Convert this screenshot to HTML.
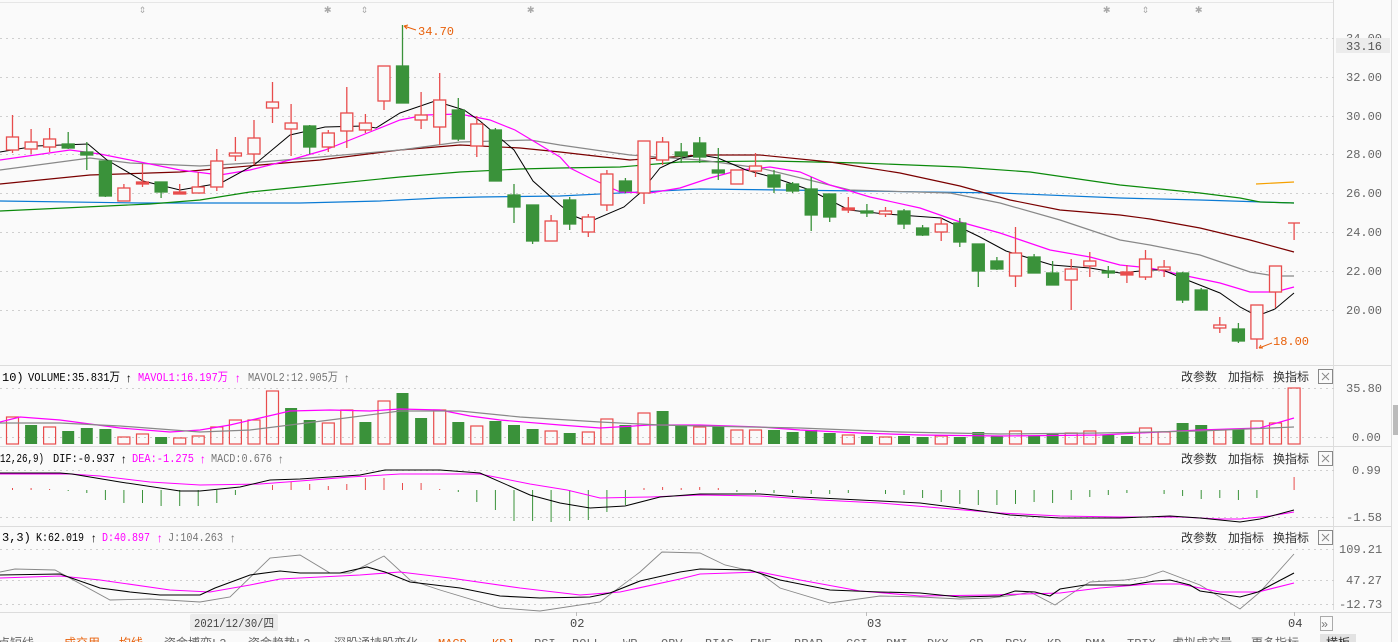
<!DOCTYPE html>
<html><head><meta charset="utf-8"><style>
html,body{margin:0;padding:0;background:#fafafa;overflow:hidden;width:1398px;height:642px}
svg{display:block}
text{font-family:"Liberation Mono","Noto Sans CJK SC",monospace;font-size:12px}
</style></head><body>
<svg width="1398" height="642" viewBox="0 0 1398 642" xmlns="http://www.w3.org/2000/svg">
<rect width="1398" height="642" fill="#fafafa"/>
<line x1="0" y1="2.5" x2="1334" y2="2.5" stroke="#e6e6e6"/>
<line x1="1333.5" y1="0" x2="1333.5" y2="610" stroke="#dcdcdc"/>
<line x1="1391.5" y1="0" x2="1391.5" y2="642" stroke="#dcdcdc"/>
<line x1="0" y1="365.5" x2="1392" y2="365.5" stroke="#dcdcdc"/>
<line x1="0" y1="446.5" x2="1392" y2="446.5" stroke="#dcdcdc"/>
<line x1="0" y1="526.5" x2="1392" y2="526.5" stroke="#dcdcdc"/>
<line x1="0" y1="612.5" x2="1392" y2="612.5" stroke="#dcdcdc"/>
<rect x="1393" y="405" width="5" height="30" fill="#bbb"/>
<g stroke="#cfcfcf" stroke-dasharray="2,4">
<line x1="0" y1="38.5" x2="1336" y2="38.5"/><line x1="0" y1="77.5" x2="1336" y2="77.5"/><line x1="0" y1="116.5" x2="1336" y2="116.5"/><line x1="0" y1="154.5" x2="1336" y2="154.5"/><line x1="0" y1="193.5" x2="1336" y2="193.5"/><line x1="0" y1="232.5" x2="1336" y2="232.5"/><line x1="0" y1="271.5" x2="1336" y2="271.5"/><line x1="0" y1="310.5" x2="1336" y2="310.5"/>
<line x1="0" y1="388.5" x2="1336" y2="388.5"/><line x1="0" y1="437.5" x2="1336" y2="437.5"/>
<line x1="0" y1="470.5" x2="1336" y2="470.5"/><line x1="0" y1="517.5" x2="1336" y2="517.5"/>
<line x1="0" y1="549.5" x2="1336" y2="549.5"/><line x1="0" y1="580.5" x2="1336" y2="580.5"/><line x1="0" y1="604.5" x2="1336" y2="604.5"/>
</g>
<g fill="#aaa" font-size="11"><text x="139" y="13">⇕</text><text x="324" y="13">✱</text><text x="361" y="13">⇕</text><text x="527" y="13">✱</text><text x="1103" y="13">✱</text><text x="1142" y="13">⇕</text><text x="1195" y="13">✱</text></g>
<g fill="#666"><text x="1346" y="42">34.00</text>
<rect x="1336" y="38" width="54" height="15" fill="#ececec"/><text x="1346" y="50" fill="#555">33.16</text>
<text x="1346" y="81">32.00</text><text x="1346" y="120">30.00</text><text x="1346" y="158">28.00</text><text x="1346" y="197">26.00</text><text x="1346" y="236">24.00</text><text x="1346" y="275">22.00</text><text x="1346" y="314">20.00</text>
<text x="1346" y="392">35.80</text><text x="1352" y="441">0.00</text>
<text x="1352" y="474">0.99</text><text x="1346" y="521">-1.58</text>
<text x="1339" y="553">109.21</text><text x="1346" y="584">47.27</text><text x="1339" y="608">-12.73</text></g>
<g fill="none" stroke-width="1.2">
<polyline stroke="#0a7ad4" points="0,201 140,203 300,203 380,201 440,198 480,197 560,196 700,189 860,191 1000,193 1120,198 1200,200 1294,203"/>
<polyline stroke="#0b8a0b" points="0,211 150,204 200,200 250,192 320,185 400,177 460,172 520,169 560,168 620,167 680,162 770,161 860,163 960,167 1030,172 1120,185 1150,188 1200,193 1240,198 1260,202 1294,203"/>
<polyline stroke="#7a0000" points="0,184 90,175 180,172 260,165 320,160 400,150 460,145 520,148 560,152 630,160 700,155 760,155 830,162 900,173 960,186 1010,200 1060,210 1120,215 1150,219 1200,228 1250,240 1294,252"/>
<polyline stroke="#888" points="0,170 90,158 130,163 200,166 250,163 320,157 400,150 460,142 530,140 560,145 630,155 700,160 760,168 850,190 950,193 1000,203 1060,220 1120,240 1150,245 1200,255 1250,272 1275,276 1294,276"/>
<polyline stroke="#f0f" points="0,160 70,150 100,154 180,170 220,175 250,170 290,160 325,150 350,140 375,130 400,120 425,115 460,114 490,120 515,130 540,145 560,157 570,168 590,178 620,192 650,193 680,188 710,178 740,170 770,167 800,172 830,185 870,197 920,208 960,222 1000,233 1050,250 1090,257 1120,265 1150,268 1182,275 1220,283 1250,292 1275,292 1294,287"/>
<polyline stroke="#000" stroke-width="1" points="0,152 36,146 88,144 107,160 143,181 180,190 221,183 254,165 290,135 325,127 364,126 376,128 400,113 435,101 464,110 480,121 514,150 533,181 560,205 574,216 589,222 624,207 640,193 660,168 681,158 700,155 718,158 746,170 775,178 810,190 849,210 885,214 941,218 980,237 1006,251 1052,265 1090,268 1120,273 1150,270 1163,270 1182,278 1220,293 1240,307 1257,316 1275,309 1294,293"/>
<polyline stroke="#f5a000" points="1256,184 1275,183 1294,182"/>
</g>
<g stroke-width="1.3">
<g stroke="#e84c4c" fill="#fafafa">
<line x1="12.5" y1="115" x2="12.5" y2="153"/><rect x="6.5" y="137" width="12" height="13"/>
<line x1="31.1" y1="129" x2="31.1" y2="154"/><rect x="25.1" y="142" width="12" height="7"/>
<line x1="49.6" y1="128" x2="49.6" y2="152"/><rect x="43.6" y="139" width="12" height="8"/>
<line x1="123.9" y1="184" x2="123.9" y2="201"/><rect x="117.9" y="188" width="12" height="13"/>
<line x1="142.5" y1="164" x2="142.5" y2="187"/><rect x="136.5" y="182" width="12" height="2" fill="#e84c4c"/>
<line x1="179.7" y1="184" x2="179.7" y2="194"/><rect x="173.7" y="192" width="12" height="2" fill="#e84c4c"/>
<line x1="198.2" y1="172" x2="198.2" y2="193"/><rect x="192.2" y="187" width="12" height="6"/>
<line x1="216.8" y1="149" x2="216.8" y2="191"/><rect x="210.8" y="161" width="12" height="26"/>
<line x1="235.4" y1="137" x2="235.4" y2="161"/><rect x="229.4" y="153" width="12" height="3"/>
<line x1="254" y1="120" x2="254" y2="165"/><rect x="248" y="138" width="12" height="16"/>
<line x1="272.5" y1="82" x2="272.5" y2="123"/><rect x="266.5" y="102" width="12" height="6"/>
<line x1="291.1" y1="104" x2="291.1" y2="156"/><rect x="285.1" y="123" width="12" height="6"/>
<line x1="328.3" y1="130" x2="328.3" y2="152"/><rect x="322.3" y="133" width="12" height="14"/>
<line x1="346.8" y1="87" x2="346.8" y2="148"/><rect x="340.8" y="113" width="12" height="18"/>
<line x1="365.4" y1="114" x2="365.4" y2="133"/><rect x="359.4" y="123" width="12" height="7"/>
<line x1="384" y1="66" x2="384" y2="110"/><rect x="378" y="66" width="12" height="35"/>
<line x1="421.1" y1="92" x2="421.1" y2="129"/><rect x="415.1" y="115" width="12" height="5"/>
<line x1="439.7" y1="73" x2="439.7" y2="145"/><rect x="433.7" y="100" width="12" height="27"/>
<line x1="476.8" y1="116" x2="476.8" y2="157"/><rect x="470.8" y="124" width="12" height="22"/>
<line x1="551.1" y1="215" x2="551.1" y2="241"/><rect x="545.1" y="221" width="12" height="20"/>
<line x1="588.3" y1="214" x2="588.3" y2="237"/><rect x="582.3" y="217" width="12" height="15"/>
<line x1="606.9" y1="170" x2="606.9" y2="211"/><rect x="600.9" y="174" width="12" height="31"/>
<line x1="644" y1="141" x2="644" y2="204"/><rect x="638" y="141" width="12" height="52"/>
<line x1="662.6" y1="137" x2="662.6" y2="165"/><rect x="656.6" y="142" width="12" height="18"/>
<line x1="736.9" y1="170" x2="736.9" y2="184"/><rect x="730.9" y="170" width="12" height="14"/>
<line x1="755.5" y1="153" x2="755.5" y2="177"/><rect x="749.5" y="166" width="12" height="5"/>
<line x1="848.3" y1="197" x2="848.3" y2="213"/><rect x="842.3" y="208" width="12" height="2" fill="#e84c4c"/>
<line x1="885.5" y1="207" x2="885.5" y2="217"/><rect x="879.5" y="211" width="12" height="3"/>
<line x1="941.2" y1="218" x2="941.2" y2="241"/><rect x="935.2" y="224" width="12" height="8"/>
<line x1="1015.5" y1="227" x2="1015.5" y2="287"/><rect x="1009.5" y="253" width="12" height="23"/>
<line x1="1071.2" y1="259" x2="1071.2" y2="310"/><rect x="1065.2" y="269" width="12" height="11"/>
<line x1="1089.8" y1="252" x2="1089.8" y2="277"/><rect x="1083.8" y="261" width="12" height="5"/>
<line x1="1126.9" y1="265" x2="1126.9" y2="283"/><rect x="1120.9" y="272" width="12" height="3" fill="#e84c4c"/>
<line x1="1145.5" y1="250" x2="1145.5" y2="280"/><rect x="1139.5" y="259" width="12" height="18"/>
<line x1="1164.1" y1="260" x2="1164.1" y2="277"/><rect x="1158.1" y="267" width="12" height="3"/>
<line x1="1219.8" y1="317" x2="1219.8" y2="333"/><rect x="1213.8" y="325" width="12" height="3"/>
<line x1="1256.9" y1="305" x2="1256.9" y2="349"/><rect x="1250.9" y="305" width="12" height="34"/>
<line x1="1275.5" y1="266" x2="1275.5" y2="308"/><rect x="1269.5" y="266" width="12" height="26"/>
<line x1="1294.1" y1="223" x2="1294.1" y2="240"/><line x1="1288" y1="223" x2="1300" y2="223"/>
</g>
<g stroke="#3a923a" fill="#3a923a">
<line x1="68.2" y1="132" x2="68.2" y2="149"/><rect x="62.2" y="144" width="12" height="4"/>
<line x1="86.8" y1="142" x2="86.8" y2="170"/><rect x="80.8" y="152" width="12" height="3"/>
<line x1="105.4" y1="161" x2="105.4" y2="197"/><rect x="99.4" y="161" width="12" height="35"/>
<line x1="161.1" y1="182" x2="161.1" y2="198"/><rect x="155.1" y="182" width="12" height="10"/>
<line x1="309.7" y1="125" x2="309.7" y2="154"/><rect x="303.7" y="126" width="12" height="21"/>
<line x1="402.5" y1="25" x2="402.5" y2="103"/><rect x="396.5" y="66" width="12" height="37"/>
<line x1="458.3" y1="98" x2="458.3" y2="141"/><rect x="452.3" y="110" width="12" height="29"/>
<line x1="495.4" y1="128" x2="495.4" y2="181"/><rect x="489.4" y="130" width="12" height="51"/>
<line x1="514" y1="184" x2="514" y2="223"/><rect x="508" y="195" width="12" height="12"/>
<line x1="532.6" y1="205" x2="532.6" y2="244"/><rect x="526.6" y="205" width="12" height="36"/>
<line x1="569.7" y1="197" x2="569.7" y2="230"/><rect x="563.7" y="200" width="12" height="24"/>
<line x1="625.4" y1="178" x2="625.4" y2="193"/><rect x="619.4" y="181" width="12" height="10"/>
<line x1="681.2" y1="143" x2="681.2" y2="163"/><rect x="675.2" y="152" width="12" height="4"/>
<line x1="699.7" y1="137" x2="699.7" y2="163"/><rect x="693.7" y="143" width="12" height="14"/>
<line x1="718.3" y1="148" x2="718.3" y2="180"/><rect x="712.3" y="170" width="12" height="3"/>
<line x1="774" y1="170" x2="774" y2="193"/><rect x="768" y="175" width="12" height="12"/>
<line x1="792.6" y1="182" x2="792.6" y2="193"/><rect x="786.6" y="184" width="12" height="7"/>
<line x1="811.2" y1="177" x2="811.2" y2="231"/><rect x="805.2" y="189" width="12" height="26"/>
<line x1="829.7" y1="194" x2="829.7" y2="222"/><rect x="823.7" y="194" width="12" height="23"/>
<line x1="866.9" y1="204" x2="866.9" y2="217"/><rect x="860.9" y="211" width="12" height="2"/>
<line x1="904" y1="209" x2="904" y2="229"/><rect x="898" y="211" width="12" height="13"/>
<line x1="922.6" y1="225" x2="922.6" y2="236"/><rect x="916.6" y="228" width="12" height="7"/>
<line x1="959.8" y1="218" x2="959.8" y2="247"/><rect x="953.8" y="223" width="12" height="19"/>
<line x1="978.3" y1="244" x2="978.3" y2="287"/><rect x="972.3" y="244" width="12" height="27"/>
<line x1="996.9" y1="257" x2="996.9" y2="270"/><rect x="990.9" y="261" width="12" height="8"/>
<line x1="1034.1" y1="254" x2="1034.1" y2="273"/><rect x="1028.1" y="257" width="12" height="16"/>
<line x1="1052.6" y1="261" x2="1052.6" y2="285"/><rect x="1046.6" y="273" width="12" height="12"/>
<line x1="1108.3" y1="266" x2="1108.3" y2="278"/><rect x="1102.3" y="271" width="12" height="2"/>
<line x1="1182.6" y1="272" x2="1182.6" y2="303"/><rect x="1176.6" y="273" width="12" height="27"/>
<line x1="1201.2" y1="288" x2="1201.2" y2="310"/><rect x="1195.2" y="290" width="12" height="20"/>
<line x1="1238.4" y1="323" x2="1238.4" y2="343"/><rect x="1232.4" y="329" width="12" height="12"/>
</g>
</g>
<g fill="#e8600a" font-size="11"><text x="418" y="35">34.70</text><text x="1273" y="345">18.00</text></g>
<path d="M404 26 L416 30 M404 26 l4 -1 m-4 1 l3 3" stroke="#e8600a" fill="none"/>
<path d="M1259 348 L1272 343 M1259 348 l4 0 m-4 0 l2 -3" stroke="#e8600a" fill="none"/>
<g font-size="12">
<text x="2" y="381" fill="#000">10)</text><text x="28" y="381" textLength="92" lengthAdjust="spacingAndGlyphs">VOLUME:35.831万</text><text x="125" y="382">↑</text>
<text x="138" y="381" fill="#f0f" textLength="90" lengthAdjust="spacingAndGlyphs">MAVOL1:16.197万</text><text x="234" y="382" fill="#f0f">↑</text>
<text x="248" y="381" fill="#777" textLength="90" lengthAdjust="spacingAndGlyphs">MAVOL2:12.905万</text><text x="343" y="382" fill="#777">↑</text>
<text x="0" y="462" textLength="44" lengthAdjust="spacingAndGlyphs">12,26,9)</text><text x="53" y="462" textLength="62" lengthAdjust="spacingAndGlyphs">DIF:-0.937</text><text x="120" y="463">↑</text>
<text x="132" y="462" fill="#f0f" textLength="62" lengthAdjust="spacingAndGlyphs">DEA:-1.275</text><text x="199" y="463" fill="#f0f">↑</text>
<text x="211" y="462" fill="#777" textLength="61" lengthAdjust="spacingAndGlyphs">MACD:0.676</text><text x="277" y="463" fill="#777">↑</text>
<text x="2" y="541">3,3)</text><text x="36" y="541" textLength="48" lengthAdjust="spacingAndGlyphs">K:62.019</text><text x="90" y="542">↑</text>
<text x="102" y="541" fill="#f0f" textLength="48" lengthAdjust="spacingAndGlyphs">D:40.897</text><text x="156" y="542" fill="#f0f">↑</text>
<text x="168" y="541" fill="#777" textLength="55" lengthAdjust="spacingAndGlyphs">J:104.263</text><text x="229" y="542" fill="#777">↑</text>
</g>
<g style="font-family:'Liberation Sans','Noto Sans CJK SC',sans-serif;font-size:13px" fill="#333">
<text x="1181" y="381">改参数</text><text x="1228" y="381">加指标</text><text x="1273" y="381">换指标</text>
<text x="1181" y="463">改参数</text><text x="1228" y="463">加指标</text><text x="1273" y="463">换指标</text>
<text x="1181" y="542">改参数</text><text x="1228" y="542">加指标</text><text x="1273" y="542">换指标</text>
</g>
<g fill="none" stroke="#888"><rect x="1318.5" y="369.5" width="14" height="14"/><rect x="1318.5" y="451.5" width="14" height="14"/><rect x="1318.5" y="530.5" width="14" height="14"/>
<path d="M1322 373l7 7M1329 373l-7 7M1322 455l7 7M1329 455l-7 7M1322 534l7 7M1329 534l-7 7"/></g>
<g stroke-width="1.2">
<g fill="#3a923a">
<rect x="25.1" y="425" width="12" height="19"/><rect x="62.2" y="431" width="12" height="13"/><rect x="80.8" y="428" width="12" height="16"/><rect x="99.4" y="429" width="12" height="15"/><rect x="155.1" y="437" width="12" height="7"/><rect x="285.1" y="408" width="12" height="36"/><rect x="303.7" y="420" width="12" height="24"/><rect x="359.4" y="422" width="12" height="22"/><rect x="396.5" y="393" width="12" height="51"/><rect x="415.1" y="418" width="12" height="26"/><rect x="452.3" y="422" width="12" height="22"/><rect x="489.4" y="421" width="12" height="23"/><rect x="508" y="425" width="12" height="19"/><rect x="526.6" y="429" width="12" height="15"/><rect x="563.7" y="433" width="12" height="11"/><rect x="619.4" y="425" width="12" height="19"/><rect x="656.6" y="411" width="12" height="33"/><rect x="675.2" y="425" width="12" height="19"/><rect x="712.3" y="426" width="12" height="18"/><rect x="768" y="430" width="12" height="14"/><rect x="786.6" y="432" width="12" height="12"/><rect x="805.2" y="430" width="12" height="14"/><rect x="823.7" y="433" width="12" height="11"/><rect x="860.9" y="436" width="12" height="8"/><rect x="898" y="436" width="12" height="8"/><rect x="916.6" y="437" width="12" height="7"/><rect x="953.8" y="437" width="12" height="7"/><rect x="972.3" y="432" width="12" height="12"/><rect x="990.9" y="436" width="12" height="8"/><rect x="1028.1" y="436" width="12" height="8"/><rect x="1046.6" y="434" width="12" height="10"/><rect x="1102.3" y="435" width="12" height="9"/><rect x="1120.9" y="436" width="12" height="8"/><rect x="1176.6" y="423" width="12" height="21"/><rect x="1195.2" y="425" width="12" height="19"/><rect x="1232.4" y="429" width="12" height="15"/>
</g>
<g fill="none" stroke="#e84c4c">
<rect x="6.5" y="417" width="12" height="27"/><rect x="43.6" y="427" width="12" height="17"/><rect x="117.9" y="437" width="12" height="7"/><rect x="136.5" y="434" width="12" height="10"/><rect x="173.7" y="438" width="12" height="6"/><rect x="192.2" y="436" width="12" height="8"/><rect x="210.8" y="427" width="12" height="17"/><rect x="229.4" y="420" width="12" height="24"/><rect x="248" y="420" width="12" height="24"/><rect x="266.5" y="391" width="12" height="53"/><rect x="322.3" y="423" width="12" height="21"/><rect x="340.8" y="410" width="12" height="34"/><rect x="378" y="401" width="12" height="43"/><rect x="433.7" y="410" width="12" height="34"/><rect x="470.8" y="426" width="12" height="18"/><rect x="545.1" y="431" width="12" height="13"/><rect x="582.3" y="432" width="12" height="12"/><rect x="600.9" y="419" width="12" height="25"/><rect x="638" y="413" width="12" height="31"/><rect x="693.7" y="427" width="12" height="17"/><rect x="730.9" y="430" width="12" height="14"/><rect x="749.5" y="430" width="12" height="14"/><rect x="842.3" y="435" width="12" height="9"/><rect x="879.5" y="437" width="12" height="7"/><rect x="935.2" y="436" width="12" height="8"/><rect x="1009.5" y="431" width="12" height="13"/><rect x="1065.2" y="433" width="12" height="11"/><rect x="1083.8" y="431" width="12" height="13"/><rect x="1139.5" y="428" width="12" height="16"/><rect x="1158.1" y="432" width="12" height="12"/><rect x="1213.8" y="430" width="12" height="14"/><rect x="1250.9" y="421" width="12" height="23"/><rect x="1269.5" y="423" width="12" height="21"/><rect x="1288.1" y="388" width="12" height="56"/>
</g>
<polyline fill="none" stroke="#f0f" points="0,422 20,417 60,420 120,428 170,432 200,430 230,425 260,418 290,411 330,410 370,411 400,409 440,410 470,416 500,420 560,425 600,428 650,425 700,425 760,427 800,430 860,433 920,435 1000,436 1100,435 1160,432 1200,430 1260,428 1294,418"/>
<polyline fill="none" stroke="#888" points="0,423 60,423 120,426 200,432 250,430 290,425 330,420 400,411 460,411 520,417 600,422 660,425 700,426 800,428 900,432 1000,434 1100,433 1200,431 1294,427"/>
</g>
<g stroke-width="1">
<g stroke="#e84c4c"><path d="M12.5 488v2M31.1 488v2M49.6 489v1M272.5 485v5M291.1 482v8M309.7 484v6M328.3 486v4M346.8 484v6M365.4 478v12M384 478v12M402.5 483v7M421.1 483v7M439.7 489v1M644 488v2M662.6 487v3M681.2 488v2M699.7 487v3M718.3 488v2M1294.1 477v13"/></g>
<g stroke="#3a923a"><path d="M68.2 490v1M86.8 490v3M105.4 490v10M123.9 490v13M142.5 490v13M161.1 490v16M179.7 490v16M198.2 490v16M216.8 490v13M235.4 490v5M458.3 490v2M476.8 490v12M495.4 490v20M514 490v31M532.6 490v31M551.1 490v32M569.7 490v31M588.3 490v30M606.9 490v22M625.4 490v15M736.9 490v2M755.5 490v2M774 490v3M792.6 490v3M811.2 490v4M829.7 490v4M848.3 490v3M885.5 490v4M904 490v5M922.6 490v8M941.2 490v12M959.8 490v14M978.3 490v15M996.9 490v15M1015.5 490v14M1034.1 490v12M1052.6 490v13M1071.2 490v10M1089.8 490v7M1108.3 490v5M1126.9 490v3M1164.1 490v4M1182.6 490v6M1201.2 490v9M1219.8 490v8M1238.4 490v10M1256.9 490v8"/></g>
<polyline fill="none" stroke="#f0f" points="0,474 70,474 100,476 150,482 200,485 260,484 300,481 350,477 400,474 440,474 480,474 530,484 567,490 600,498 650,497 700,495 760,496 820,500 880,503 940,508 1000,513 1060,516 1120,517 1180,517 1220,519 1240,519 1270,516 1294,512"/>
<polyline fill="none" stroke="#000" points="0,473 60,473 72,474 120,482 180,491 200,491 240,487 270,480 300,479 360,475 385,470 440,470 480,473 530,495 560,503 590,508 625,506 660,497 700,494 760,494 800,497 860,500 920,503 960,508 1010,515 1060,518 1120,518 1170,516 1200,518 1240,522 1260,519 1294,510"/>
</g>
<g fill="none" stroke-width="1.1">
<polyline stroke="#888" stroke-width="0.9" points="0,572 15,569 55,570 110,600 150,599 200,602 230,597 270,558 300,555 330,573 350,573 384,556 410,580 440,590 500,608 540,611 600,602 640,572 662,552 700,553 725,565 760,573 780,588 830,603 880,596 920,597 960,599 990,598 1015,595 1030,592 1055,605 1080,588 1090,582 1125,580 1145,577 1163,571 1200,585 1240,609 1260,592 1294,554"/>
<polyline stroke="#f0f" points="0,578 60,576 100,580 170,590 210,592 250,585 280,579 360,575 400,572 450,578 520,588 580,595 620,592 680,579 700,574 760,572 800,580 860,591 920,596 990,595 1060,593 1100,588 1150,584 1180,584 1220,592 1258,592 1294,583"/>
<polyline stroke="#000" points="0,575 60,574 100,588 130,592 160,595 200,595 215,588 250,575 280,571 300,573 340,573 367,567 385,572 410,582 460,588 500,596 540,598 590,597 610,593 640,581 680,572 700,569 750,570 780,580 830,590 880,592 920,593 960,597 1000,596 1015,591 1035,592 1050,596 1060,589 1085,585 1130,585 1155,581 1170,580 1190,585 1200,591 1240,597 1258,592 1294,573"/>
</g>
<rect x="190" y="614" width="88" height="17" rx="2" fill="#ececec"/>
<g fill="#444" font-size="12"><text x="194" y="627" textLength="80" lengthAdjust="spacingAndGlyphs">2021/12/30/四</text><text x="570" y="627">02</text><text x="867" y="627">03</text><text x="1288" y="627">04</text></g>
<g stroke="#bbb"><line x1="576.5" y1="612" x2="576.5" y2="616"/><line x1="866.5" y1="612" x2="866.5" y2="616"/><line x1="1294.5" y1="612" x2="1294.5" y2="616"/></g>
<rect x="1320.5" y="616.5" width="12" height="14" fill="#fafafa" stroke="#aaa"/><text x="1321" y="628" fill="#777" font-size="11">»</text>
<g style="font-family:'Liberation Sans','Noto Sans CJK SC',sans-serif;font-size:13px" fill="#666">
<text x="-2" y="647">点短线</text><text x="64" y="647" fill="#e8600a">成交用</text><text x="119" y="647" fill="#e8600a">均线</text><text x="164" y="647">资金博弈L2</text><text x="248" y="647">资金趋势L2</text><text x="334" y="647">深股通持股变化</text><text x="438" y="647" fill="#e8600a">MACD</text><text x="492" y="647" fill="#e8600a">KDJ</text><text x="534" y="647">RSI</text><text x="572" y="647">BOLL</text><text x="623" y="647">WR</text><text x="661" y="647">OBV</text><text x="705" y="647">BIAS</text><text x="750" y="647">ENE</text><text x="794" y="647">BRAR</text><text x="846" y="647">CCI</text><text x="886" y="647">DMI</text><text x="927" y="647">DKX</text><text x="969" y="647">CR</text><text x="1005" y="647">PSY</text><text x="1047" y="647">KD</text><text x="1085" y="647">DMA</text><text x="1127" y="647">TRIX</text><text x="1172" y="647">虚拟成交量</text><text x="1251" y="647">更多指标</text>
<rect x="1320" y="634" width="36" height="10" fill="#e2e2e2"/><text x="1326" y="647" fill="#333">横板</text>
</g>
</svg>
</body></html>
